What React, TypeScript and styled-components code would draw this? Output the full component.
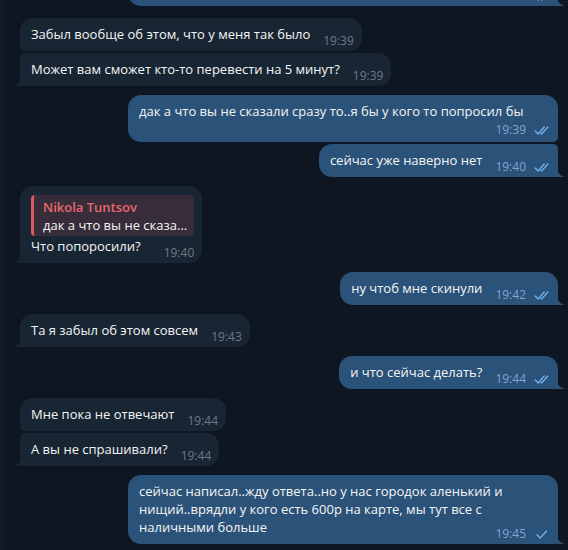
import React from "react";
import styled, { createGlobalStyle, css } from "styled-components";

const Global = createGlobalStyle`
  html, body { margin: 0; padding: 0; background: #0e1621; }
  body { font-family: "Open Sans", "Noto Sans", sans-serif; overflow: hidden; }
`;

const Screen = styled.div`
  display: flex;
  width: 568px;
  height: 550px;
  background: #0e1621;
  overflow: hidden;
`;

const Edge = styled.div`
  flex: none;
  width: 4px;
  background: #121b25;
`;

const Feed = styled.div`
  flex: 1;
  display: flex;
  flex-direction: column;
  justify-content: flex-end;
  gap: 9px;
  padding: 0 10px 6px 16px;
  overflow: hidden;
`;

const Group = styled.div<{ $out?: boolean; $loose?: boolean }>`
  flex: none;
  display: flex;
  flex-direction: column;
  gap: 2px;
  align-items: ${(p) => (p.$out ? "flex-end" : "flex-start")};
  ${(p) => p.$loose && css`margin-bottom: 3px;`}
`;

const BIG = 13;
const SMALL = 5;

const Bubble = styled.div<{ $out?: boolean; $first?: boolean; $last?: boolean }>`
  position: relative;
  box-sizing: border-box;
  max-width: 430px;
  padding: 7px 8px 8px 11px;
  background: ${(p) => (p.$out ? "#2b5278" : "#182533")};
  color: #f5f5f5;
  font-size: 13px;
  line-height: 18px;
  display: flow-root;
  border-radius: ${(p) =>
    p.$out
      ? `${BIG}px ${p.$first ? BIG : SMALL}px ${p.$last ? 0 : SMALL}px ${BIG}px`
      : `${p.$first ? BIG : SMALL}px ${BIG}px ${BIG}px ${p.$last ? 0 : SMALL}px`};
`;

const Tail = styled.svg<{ $out?: boolean }>`
  position: absolute;
  bottom: 0;
  width: 7px;
  height: 10px;
  ${(p) =>
    p.$out
      ? css`right: -6px; transform: scaleX(-1);`
      : css`left: -6px;`}
  fill: ${(p) => (p.$out ? "#2b5278" : "#182533")};
`;

/* the time floats at the end of the last line; when it does not fit there it
   drops under the text ($drop), with a shorter gap than a full text line */
const Meta = styled.span<{ $out?: boolean; $drop?: boolean }>`
  float: right;
  display: inline-flex;
  align-items: center;
  gap: 8px;
  margin: ${(p) => (p.$drop ? "3px 0 -3px 13px" : "9px 0 -5px 13px")};
  font-size: 12px;
  line-height: 14px;
  white-space: nowrap;
  color: ${(p) => (p.$out ? "#7ea8d0" : "#6c7a88")};
`;

const Checks = styled.svg`
  width: 16px;
  height: 11px;
  flex: none;
  fill: none;
  stroke: #6fb4ef;
  stroke-width: 1.3;
  stroke-linecap: round;
  stroke-linejoin: round;
`;

const Reply = styled.div`
  margin: 2px 0 1px;
  padding: 3px 7px 2px 9px;
  border-left: 3px solid #dd5a60;
  border-radius: 4px;
  background: #372c39;
`;

const ReplyName = styled.div`
  font-weight: 600;
  color: #e6686c;
  white-space: nowrap;
`;

const ReplyText = styled.div`
  max-width: 160px;
  white-space: nowrap;
  overflow: hidden;
  text-overflow: ellipsis;
`;

type Msg = {
  text: string;
  time: string;
  out?: boolean;
  read?: boolean;
  drop?: boolean;
  reply?: { name: string; text: string };
};

const TailShape = ({ out }: { out?: boolean }) => (
  <Tail $out={out} viewBox="0 0 7 10" aria-hidden>
    <path d="M7 0 Q7 7.5 0.8 9.2 Q0 9.5 0.6 10 L7 10 Z" />
  </Tail>
);

const CheckIcon = ({ read }: { read?: boolean }) => (
  <Checks viewBox="0 0 16 11" aria-hidden>
    {read ? (
      <>
        <path d="M1.2 6 L4.2 9 L10.2 2" />
        <path d="M7 8.4 L7.6 9 L13.8 2" />
      </>
    ) : (
      <path d="M3 5.8 L6.2 9 L12.6 2" />
    )}
  </Checks>
);

const Message = ({ m, first, last }: { m: Msg; first: boolean; last: boolean }) => (
  <Bubble $out={m.out} $first={first} $last={last}>
    {m.reply && (
      <Reply>
        <ReplyName>{m.reply.name}</ReplyName>
        <ReplyText>{m.reply.text}</ReplyText>
      </Reply>
    )}
    {m.text}
    <Meta $out={m.out} $drop={m.drop}>
      {m.time}
      {m.out && <CheckIcon read={m.read} />}
    </Meta>
    {last && <TailShape out={m.out} />}
  </Bubble>
);

const groups: { out?: boolean; loose?: boolean; msgs: Msg[] }[] = [
  {
    out: true,
    loose: true,
    msgs: [
      {
        text: "ну можно попросить кого-нибудь перевести вам тоже",
        time: "19:39",
        out: true,
        read: true,
      },
    ],
  },
  {
    msgs: [
      { text: "Забыл вообще об этом, что у меня так было", time: "19:39" },
      { text: "Может вам сможет кто-то перевести на 5 минут?", time: "19:39" },
    ],
  },
  {
    out: true,
    msgs: [
      {
        text: "дак а что вы не сказали сразу то..я бы у кого то попросил бы",
        time: "19:39",
        out: true,
        read: true,
        drop: true,
      },
      { text: "сейчас уже наверно нет", time: "19:40", out: true, read: true },
    ],
  },
  {
    msgs: [
      {
        text: "Что попоросили?",
        time: "19:40",
        reply: {
          name: "Nikola Tuntsov",
          text: "дак а что вы не сказа...",
        },
      },
    ],
  },
  { out: true, msgs: [{ text: "ну чтоб мне скинули", time: "19:42", out: true, read: true }] },
  { msgs: [{ text: "Та я забыл об этом совсем", time: "19:43" }] },
  { out: true, msgs: [{ text: "и что сейчас делать?", time: "19:44", out: true, read: true }] },
  {
    msgs: [
      { text: "Мне пока не отвечают", time: "19:44" },
      { text: "А вы не спрашивали?", time: "19:44" },
    ],
  },
  {
    out: true,
    msgs: [
      {
        text:
          "сейчас написал..жду ответа..но у нас городок аленький и нищий..врядли у кого есть 600р на карте, мы тут все с наличными больше",
        time: "19:45",
        out: true,
        read: false,
      },
    ],
  },
];

export default function App() {
  return (
    <>
      <Global />
      <Screen>
        <Edge />
        <Feed>
          {groups.map((g, gi) => (
            <Group key={gi} $out={g.out} $loose={g.loose}>
              {g.msgs.map((m, mi) => (
                <Message key={mi} m={m} first={mi === 0} last={mi === g.msgs.length - 1} />
              ))}
            </Group>
          ))}
        </Feed>
      </Screen>
    </>
  );
}
